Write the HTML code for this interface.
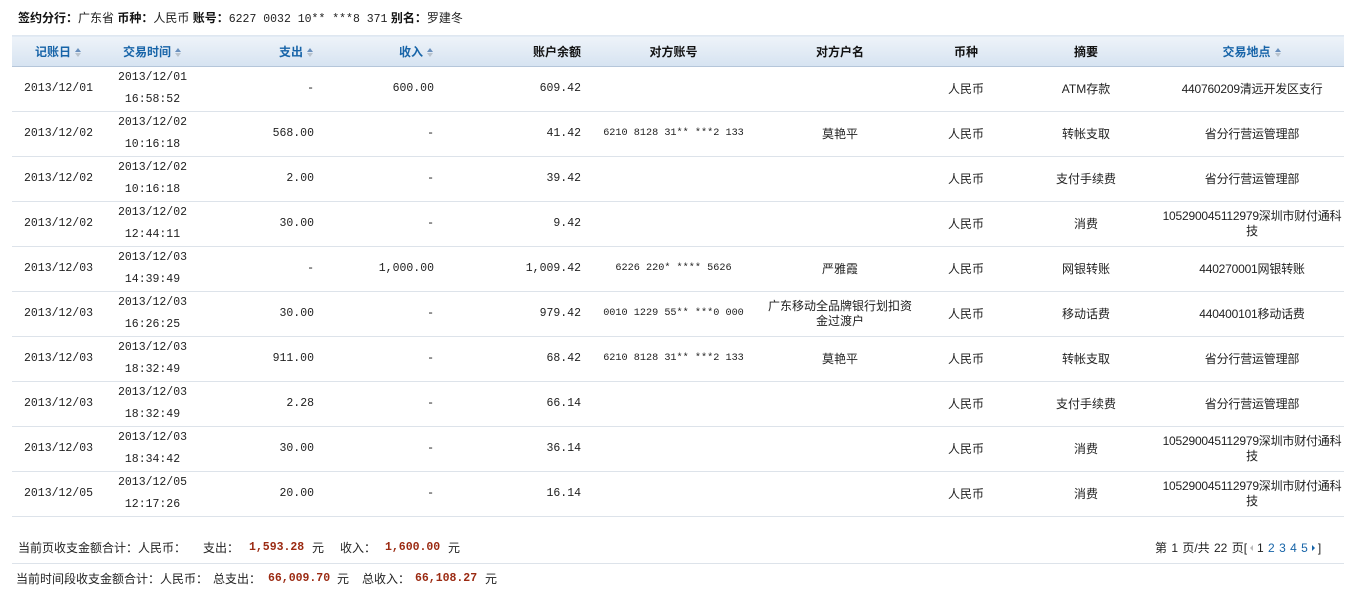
<!DOCTYPE html>
<html><head><meta charset="utf-8">
<style>
*{margin:0;padding:0;box-sizing:border-box}
body{width:1346px;height:589px;background:#fff;font-family:"Liberation Sans","Noto Sans CJK SC",sans-serif;font-size:12px;color:#222;position:relative;overflow:hidden}
.top{position:absolute;left:18px;top:9px;font-size:12px;}
.top b{font-weight:bold;color:#111}
.m{font-family:"Liberation Mono","Noto Sans CJK SC",monospace;font-size:11.5px}
table{position:absolute;left:12px;top:35px;width:1332px;border-collapse:collapse;table-layout:fixed}
th{height:31px;background:linear-gradient(#eef3f9,#d6e3f1);border-top:1px solid #dfe7f0;border-bottom:1px solid #b5c6da;font-weight:bold;font-size:12px;color:#111}
th.s{color:#1764a8}
.ar{display:inline-block;width:7px;height:9px;vertical-align:-1px;margin-left:4px;position:relative}
.ar:before{content:"";position:absolute;left:0;top:0;border-left:3.5px solid transparent;border-right:3.5px solid transparent;border-bottom:4px solid #6a90bd}
.ar:after{content:"";position:absolute;left:0;top:5px;border-left:3.5px solid transparent;border-right:3.5px solid transparent;border-top:4px solid #b9c3cd}
td{height:45px;border-bottom:1px solid #dde3ea;text-align:center;line-height:22px;font-size:12px}
td.r{text-align:right;padding-right:6px}
td.n{font-family:"Liberation Mono","Noto Sans CJK SC",monospace;font-size:11.5px}
td.ac{font-family:"Liberation Mono",monospace;font-size:10.2px}
td.w{line-height:15px}
td.loc{padding:0 1px;letter-spacing:-0.2px;white-space:nowrap}
.a{position:absolute;white-space:nowrap}
.red{color:#9b2a12;font-weight:bold;font-family:"Liberation Mono",monospace;font-size:11.5px}
.hl{position:absolute;left:12px;width:1332px;height:1px;background:#dde3ea;top:563px}
.pg{position:absolute;left:1155px;top:539px;word-spacing:1px}
.pg a{color:#1764a8;text-decoration:none}
.tri{display:inline-block;width:0;height:0;border-top:3px solid transparent;border-bottom:3px solid transparent;vertical-align:1px}
</style></head><body>
<div class="top"><b>签约分行：</b>广东省 <b>币种：</b>人民币 <b>账号：</b><span class="m">6227 0032 10** ***8 371</span> <b>别名：</b>罗建冬</div>
<table>
<colgroup><col style="width:93px"><col style="width:95px"><col style="width:120px"><col style="width:120px"><col style="width:147px"><col style="width:173px"><col style="width:160px"><col style="width:92px"><col style="width:148px"><col style="width:184px"></colgroup>
<tr><th class="s">记账日<span class="ar"></span></th><th class="s">交易时间<span class="ar"></span></th><th class="s" style="text-align:right;padding-right:6px">支出<span class="ar"></span></th><th class="s" style="text-align:right;padding-right:6px">收入<span class="ar"></span></th><th style="text-align:right;padding-right:6px">账户余额</th><th>对方账号</th><th>对方户名</th><th>币种</th><th>摘要</th><th class="s">交易地点<span class="ar"></span></th></tr>
<tr><td class="n">2013/12/01</td><td class="n">2013/12/01<br>16:58:52</td><td class="r n">-</td><td class="r n">600.00</td><td class="r n">609.42</td><td class="ac"></td><td></td><td>人民币</td><td>ATM存款</td><td class="loc">440760209清远开发区支行</td></tr>
<tr><td class="n">2013/12/02</td><td class="n">2013/12/02<br>10:16:18</td><td class="r n">568.00</td><td class="r n">-</td><td class="r n">41.42</td><td class="ac">6210 8128 31** ***2 133</td><td>莫艳平</td><td>人民币</td><td>转帐支取</td><td class="loc">省分行营运管理部</td></tr>
<tr><td class="n">2013/12/02</td><td class="n">2013/12/02<br>10:16:18</td><td class="r n">2.00</td><td class="r n">-</td><td class="r n">39.42</td><td class="ac"></td><td></td><td>人民币</td><td>支付手续费</td><td class="loc">省分行营运管理部</td></tr>
<tr><td class="n">2013/12/02</td><td class="n">2013/12/02<br>12:44:11</td><td class="r n">30.00</td><td class="r n">-</td><td class="r n">9.42</td><td class="ac"></td><td></td><td>人民币</td><td>消费</td><td class="w loc">105290045112979深圳市财付通科<br>技</td></tr>
<tr><td class="n">2013/12/03</td><td class="n">2013/12/03<br>14:39:49</td><td class="r n">-</td><td class="r n">1,000.00</td><td class="r n">1,009.42</td><td class="ac">6226 220* **** 5626</td><td>严雅霞</td><td>人民币</td><td>网银转账</td><td class="loc">440270001网银转账</td></tr>
<tr><td class="n">2013/12/03</td><td class="n">2013/12/03<br>16:26:25</td><td class="r n">30.00</td><td class="r n">-</td><td class="r n">979.42</td><td class="ac">0010 1229 55** ***0 000</td><td class="w">广东移动全品牌银行划扣资<br>金过渡户</td><td>人民币</td><td>移动话费</td><td class="loc">440400101移动话费</td></tr>
<tr><td class="n">2013/12/03</td><td class="n">2013/12/03<br>18:32:49</td><td class="r n">911.00</td><td class="r n">-</td><td class="r n">68.42</td><td class="ac">6210 8128 31** ***2 133</td><td>莫艳平</td><td>人民币</td><td>转帐支取</td><td class="loc">省分行营运管理部</td></tr>
<tr><td class="n">2013/12/03</td><td class="n">2013/12/03<br>18:32:49</td><td class="r n">2.28</td><td class="r n">-</td><td class="r n">66.14</td><td class="ac"></td><td></td><td>人民币</td><td>支付手续费</td><td class="loc">省分行营运管理部</td></tr>
<tr><td class="n">2013/12/03</td><td class="n">2013/12/03<br>18:34:42</td><td class="r n">30.00</td><td class="r n">-</td><td class="r n">36.14</td><td class="ac"></td><td></td><td>人民币</td><td>消费</td><td class="w loc">105290045112979深圳市财付通科<br>技</td></tr>
<tr><td class="n">2013/12/05</td><td class="n">2013/12/05<br>12:17:26</td><td class="r n">20.00</td><td class="r n">-</td><td class="r n">16.14</td><td class="ac"></td><td></td><td>人民币</td><td>消费</td><td class="w loc">105290045112979深圳市财付通科<br>技</td></tr>
</table>
<div class="a" style="left:18px;top:539px">当前页收支金额合计：人民币：</div>
<div class="a" style="left:203px;top:539px">支出：</div>
<div class="a red" style="left:249px;top:541px">1,593.28</div>
<div class="a" style="left:312px;top:539px">元</div>
<div class="a" style="left:340px;top:539px">收入：</div>
<div class="a red" style="left:385px;top:541px">1,600.00</div>
<div class="a" style="left:448px;top:539px">元</div>
<div class="pg">第 1 页/共 22 页[<span class="tri" style="border-right:3px solid #bbb;margin:0 4px 0 3px"></span>1 <a>2</a> <a>3</a> <a>4</a> <a>5</a><span class="tri" style="border-left:3px solid #1764a8;margin:0 3px 0 4px"></span>]</div>
<div class="hl"></div>
<div class="a" style="left:16px;top:570px">当前时间段收支金额合计：人民币：</div>
<div class="a" style="left:213px;top:570px">总支出：</div>
<div class="a red" style="left:268px;top:572px">66,009.70</div>
<div class="a" style="left:337px;top:570px">元</div>
<div class="a" style="left:362px;top:570px">总收入：</div>
<div class="a red" style="left:415px;top:572px">66,108.27</div>
<div class="a" style="left:485px;top:570px">元</div>
</body></html>
